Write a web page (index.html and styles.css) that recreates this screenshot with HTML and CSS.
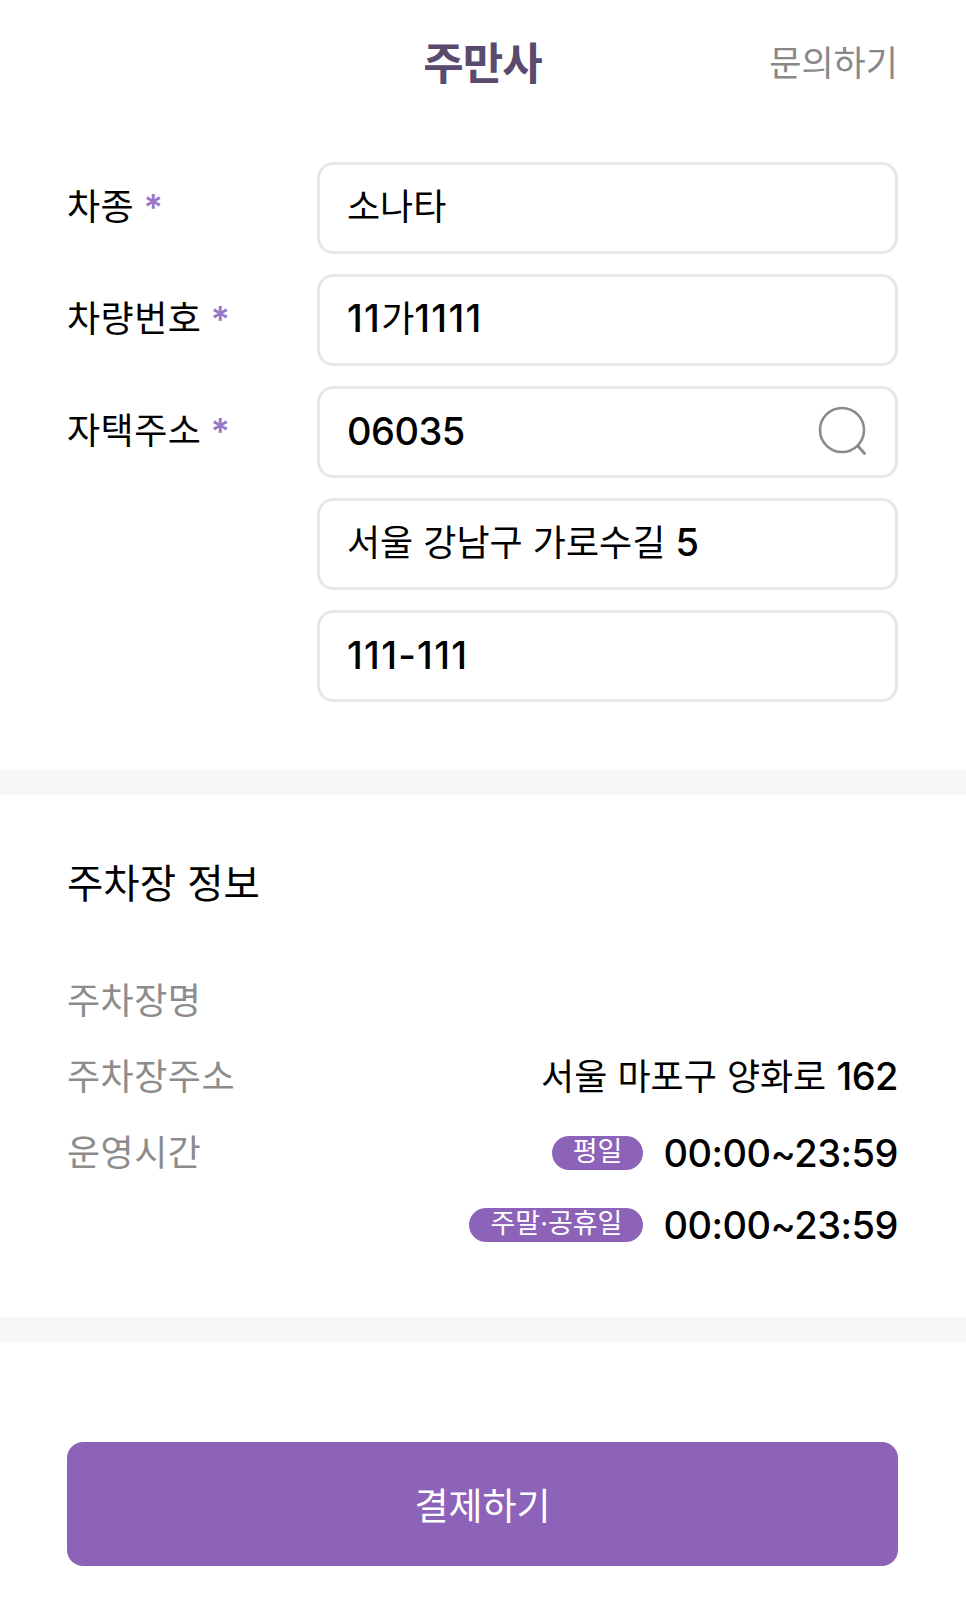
FILE: index.html
```html
<!DOCTYPE html>
<html lang="ko">
	<head>
		<meta charset="utf-8">
		<title>주만사</title>
		<link rel="stylesheet" href="styles.css">
	</head>
	<body>

		<header class="topbar">
			<span></span>
			<h1 class="brand">주만사</h1>
			<a class="contact" href="#">문의하기</a>
		</header>

		<section class="form">
			<div class="form-row">
				<label class="form-label">차종 <span class="req">*</span></label>
				<div class="field">소나타</div>
			</div>
			<div class="form-row">
				<label class="form-label">차량번호 <span class="req">*</span></label>
				<div class="field"><span><span class="num ones">11</span>가<span class="num ones">1111</span></span></div>
			</div>
			<div class="form-row">
				<label class="form-label">자택주소 <span class="req">*</span></label>
				<div class="field-stack">
					<div class="field">
						<span class="num">06035</span>
						<svg class="search" viewBox="0 0 50 58" width="50" height="58">
							<circle cx="24" cy="26" r="22" fill="none" stroke="#8b8b8b" stroke-width="2.6"/>
							<path d="M40 42 L46.5 49.5" fill="none" stroke="#8b8b8b" stroke-width="2.8" stroke-linecap="round"/>
						</svg>
					</div>
					<div class="field"><span>서울 강남구 가로수길 <span class="num">5</span></span></div>
					<div class="field"><span class="num ones">111-111</span></div>
				</div>
			</div>
		</section>

		<div class="divider"></div>

		<section class="info">
			<h2 class="info-title">주차장 정보</h2>
			<div class="info-row">
				<span class="info-label">주차장명</span>
			</div>
			<div class="info-row">
				<span class="info-label">주차장주소</span>
				<span class="info-value"><span>서울 마포구 양화로 <span class="num">162</span></span></span>
			</div>
			<div class="info-row">
				<span class="info-label">운영시간</span>
				<span class="info-value hours"><span class="badge">평일</span><span class="num">00:00~23:59</span></span>
			</div>
			<div class="info-row last">
				<span class="info-label"></span>
				<span class="info-value hours"><span class="badge">주말·공휴일</span><span class="num">00:00~23:59</span></span>
			</div>
		</section>

		<div class="divider"></div>

		<section class="pay">
			<button class="pay-btn" type="button">결제하기</button>
		</section>

	</body>
</html>
```

FILE: styles.css
```css
html,body {
	margin: 0;
	padding: 0;
	background: #fff;
	color: #000;
	font-family: Inter, "Noto Sans CJK KR", sans-serif;
}

/* digits run a little larger than the hangul next to them */
.num {
	font-size: 38px;
	font-weight: 450;
	letter-spacing: -0.5px;
}
.num.ones {
	letter-spacing: 1.3px;
}

/* Header */
.topbar {
	display: grid;
	grid-template-columns: 1fr auto 1fr;
	align-items: center;
	height: 126px;
	padding: 0 68px 0 67px;
}
.brand {
	margin: 2px 0 0;
	font-size: 44px;
	font-weight: 700;
	line-height: 1;
	letter-spacing: -1px;
	color: #594a6e;
}
.contact {
	justify-self: end;
	margin-top: -6px;
	font-size: 35px;
	font-weight: 400;
	color: #888;
	text-decoration: none;
}

/* Form */
.form {
	display: flex;
	flex-direction: column;
	gap: 20px;
	padding: 36px 68px 68px 67px;
}
.form-row {
	display: flex;
}
.form-label {
	width: 250px;
	flex: none;
	height: 90px;
	line-height: 90px;
	font-size: 36px;
	letter-spacing: 0.5px;
}
.req {
	margin-left: -1.5px;
	font-weight: 600;
	color: #9a74c9;
}
.field-stack {
	flex: 1;
	display: flex;
	flex-direction: column;
	gap: 20px;
}
.field {
	flex: 1 0 auto;
	display: flex;
	align-items: center;
	justify-content: space-between;
	box-sizing: border-box;
	height: 92px;
	padding: 0 30px 3px 27px;
	border: 3px solid #e7e7e7;
	border-radius: 16px;
	font-size: 36px;
	line-height: 50px;
}
.search {
	margin: 4px -2.5px 0 0;
}

.divider {
	height: 25px;
	background: #f7f7f9;
}

/* Parking info */
.info {
	padding: 64px 68px 61px 67px;
}
.info-title {
	margin: 0 0 51px;
	font-size: 39.5px;
	font-weight: 400;
	line-height: 50px;
}
.info-row {
	display: flex;
	justify-content: space-between;
	align-items: center;
	height: 76px;
	font-size: 36px;
}
.info-row.last {
	height: 68px;
}
.info-label {
	color: #8c8c8c;
	letter-spacing: 0.5px;
}
.info-value {
	display: flex;
	align-items: center;
}
.info-value.hours {
	margin-top: 5px;
}
.badge {
	height: 34px;
	margin-right: 20px;
	padding: 0 21px;
	border-radius: 17px;
	background: #8d63b9;
	color: #fff;
	font-size: 27px;
	line-height: 32px;
}

/* Pay button */
.pay {
	padding: 100px 68px 41px 67px;
}
.pay-btn {
	display: block;
	width: 100%;
	height: 124px;
	border: 0;
	border-radius: 16px;
	background: #8d63b9;
	color: #fff;
	font-family: inherit;
	font-size: 37px;
	padding: 0;
}
```
